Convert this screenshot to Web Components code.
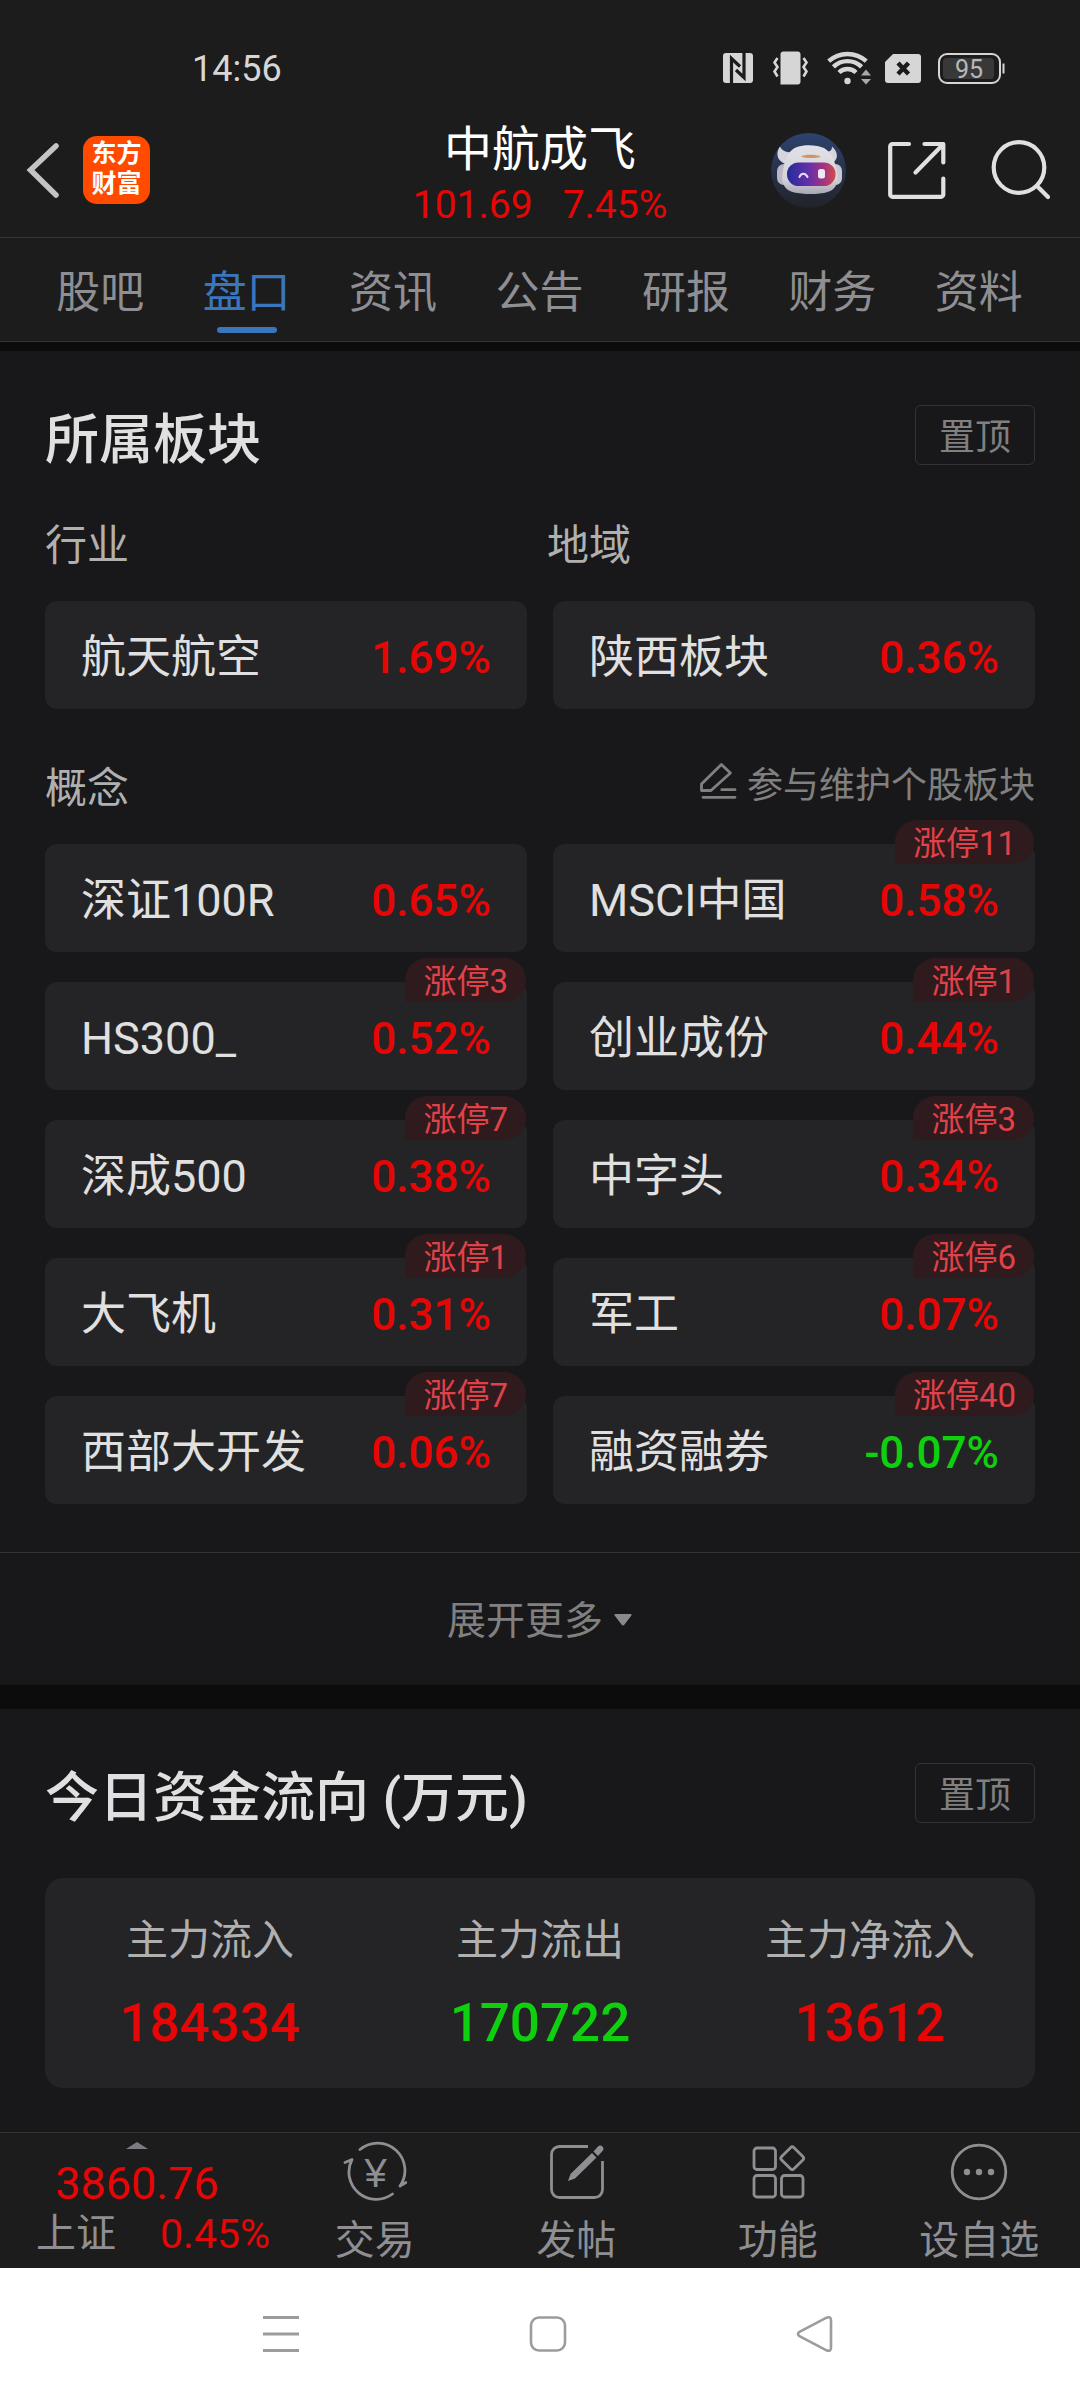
<!DOCTYPE html>
<html lang="zh-CN">
<head>
<meta charset="UTF-8">
<meta name="viewport" content="width=device-width, initial-scale=1">
<title>中航成飞 - 盘口</title>
<style>
  :root {
    --bar: #1c1c1c;
    --page: #18181a;
    --band: #0c0c0c;
    --card: #242426;
    --line: #333335;
    --text: #e0e0e0;
    --muted: #8e8e93;
    --dim: #808080;
    --up: #e60606;
    --down: #0fd00f;
    --blue: #3a76bd;
  }

  body {
    margin: 0;
    min-height: 100vh;
    display: flex;
    flex-direction: column;
    background: var(--page);
    color: var(--text);
    font-family: Roboto, "Noto Sans CJK SC", sans-serif;
  }

  main {
    flex: 1;
  }
</style>
</head>
<body>
  <status-bar time="14:56" battery="95"></status-bar>
  <stock-header name="中航成飞" price="101.69" change="7.45%"></stock-header>
  <stock-tabs items="股吧,盘口,资讯,公告,研报,财务,资料" active="盘口"></stock-tabs>

  <main>
    <board-section heading="所属板块">
      <board-pair>
        <span slot="left">行业</span>
        <span slot="right">地域</span>
      </board-pair>
      <board-grid>
        <board-chip name="航天航空" rate="1.69%"></board-chip>
        <board-chip name="陕西板块" rate="0.36%"></board-chip>
      </board-grid>
      <board-concept>概念<span slot="link">参与维护个股板块</span></board-concept>
      <board-grid>
        <board-chip name="深证100R" rate="0.65%"></board-chip>
        <board-chip name="MSCI中国" rate="0.58%" badge="涨停11"></board-chip>
        <board-chip name="HS300_" rate="0.52%" badge="涨停3"></board-chip>
        <board-chip name="创业成份" rate="0.44%" badge="涨停1"></board-chip>
        <board-chip name="深成500" rate="0.38%" badge="涨停7"></board-chip>
        <board-chip name="中字头" rate="0.34%" badge="涨停3"></board-chip>
        <board-chip name="大飞机" rate="0.31%" badge="涨停1"></board-chip>
        <board-chip name="军工" rate="0.07%" badge="涨停6"></board-chip>
        <board-chip name="西部大开发" rate="0.06%" badge="涨停7"></board-chip>
        <board-chip name="融资融券" rate="-0.07%" badge="涨停40"></board-chip>
      </board-grid>
      <expand-button slot="footer">展开更多</expand-button>
    </board-section>

    <board-section heading="今日资金流向 (万元)">
      <fund-flow inflow="184334" outflow="170722" net="13612"></fund-flow>
    </board-section>
  </main>

  <bottom-bar index-name="上证" index-value="3860.76" index-change="0.45%"></bottom-bar>
  <system-nav></system-nav>

<script>
// Shared reset, prepended to each component's own styles
const base = `
  * { box-sizing: border-box; }
  svg { display: block; flex: none; }
  a { color: inherit; text-decoration: none; }
  button {
    margin: 0;
    padding: 0;
    border: 0;
    background: none;
    color: inherit;
    font: inherit;
    cursor: pointer;
  }
`;

class BaseElement extends HTMLElement {
  connectedCallback() {
    if (!this.shadowRoot) this.attachShadow({ mode: 'open' });
    this.shadowRoot.innerHTML = `<style>${base}${this.styles()}</style>${this.template()}`;
  }

  styles() {
    return '';
  }

  template() {
    return '<slot></slot>';
  }

  attr(name) {
    return this.getAttribute(name) || '';
  }
}

class StatusBar extends BaseElement {
  styles() {
    return `
      :host {
        display: flex;
        justify-content: space-between;
        align-items: center;
        padding: 46px 74px 0 192px;
        background: var(--bar);
        color: #d6d6d6;
      }
      .time { padding-top: 2px; font-size: 36px; line-height: 42px; }
      .icons { display: flex; align-items: center; gap: 14px; }
    `;
  }

  template() {
    return `
      <span class="time">${this.attr('time')}</span>
      <div class="icons">
        <svg width="34" height="36" viewBox="0 0 34 36" role="img" aria-label="NFC">
          <rect x="1" y="3" width="30" height="30" rx="3" fill="#d6d6d6"/>
          <path d="M9.500 33V8.500L18 16.500M22 3V27.500L14 20" fill="none" stroke="#1c1c1c" stroke-width="3.200"/>
        </svg>
        <svg width="40" height="36" viewBox="0 0 40 36" role="img" aria-label="振动">
          <path d="M13.500 1.500h14a3 3 0 0 1 3 3v27a3 3 0 0 1-3 3h-17v-30a3 3 0 0 1 3-3z" fill="#d6d6d6"/>
          <path d="M7.500 8L4.500 12.500L7.500 17L4.500 21.500L7.500 26.500M33.500 8L36.500 12.500L33.500 17L36.500 21.500L33.500 26.500" fill="none" stroke="#d6d6d6" stroke-width="2.600"/>
        </svg>
        <svg width="47" height="36" viewBox="0 0 47 36" role="img" aria-label="Wi-Fi">
          <g fill="none" stroke="#d6d6d6" stroke-width="4.400">
            <path d="M4.700 11.200a28 28 0 0 1 37.600 0"/>
            <path d="M9.400 16.900a20 20 0 0 1 28.200 0"/>
            <path d="M15 22.500a12 12 0 0 1 17 0"/>
          </g>
          <circle cx="23.500" cy="31" r="3.200" fill="#d6d6d6"/>
          <path d="M42 19.500L47 25.500H37zM37 29H47L42 34.500z" fill="#a8a8a8"/>
        </svg>
        <svg width="36" height="36" viewBox="0 0 36 36" role="img" aria-label="无SIM卡">
          <path d="M8 4H33a3 3 0 0 1 3 3V30a3 3 0 0 1-3 3H3a3 3 0 0 1-3-3V12z" fill="#d6d6d6"/>
          <path d="M13 13L23.500 24M23.500 13L13 24" stroke="#1c1c1c" stroke-width="4.400"/>
        </svg>
        <svg width="71" height="36" viewBox="0 0 71 36">
          <rect x="4" y="4" width="61" height="29" rx="8" fill="none" stroke="#d6d6d6" stroke-width="2"/>
          <rect x="8" y="8" width="51" height="21" rx="4" fill="#383838"/>
          <path d="M68.500 13.500V23.500" stroke="#d6d6d6" stroke-width="2"/>
          <text x="34" y="28" text-anchor="middle" font-size="25" fill="#b8b8b8">${this.attr('battery')}</text>
        </svg>
      </div>
    `;
  }
}

class StockHeader extends BaseElement {
  styles() {
    return `
      :host {
        display: grid;
        grid-template-columns: 1fr auto 1fr;
        align-items: center;
        padding: 16px 24px 3px;
        border-bottom: 1px solid var(--line);
        background: var(--bar);
      }
      .left { display: flex; align-items: center; gap: 23px; }
      .right {
        display: flex;
        align-items: center;
        justify-content: flex-end;
        gap: 42px;
        padding-right: 6px;
      }
      .logo {
        width: 67px;
        padding: 3px 0 5px;
        border-radius: 14px;
        background: #ff4a00;
        color: #fff;
        font-size: 25px;
        font-weight: 700;
        line-height: 30px;
        text-align: center;
      }
      .logo span { display: block; }
      .middle { padding: 16px 0 2px; text-align: center; }
      h1 {
        margin: 0;
        color: #fff;
        font-size: 48px;
        font-weight: 400;
        line-height: 56px;
      }
      .quote {
        display: flex;
        justify-content: center;
        gap: 30px;
        color: var(--up);
        font-size: 39px;
        line-height: 54px;
      }
    `;
  }

  template() {
    return `
      <div class="left">
        <button aria-label="返回">
          <svg width="36" height="64" viewBox="0 0 36 64"><path d="M32 8L6.500 32L32 57" fill="none" stroke="#c4c4c4" stroke-width="5.500" stroke-linecap="round"/></svg>
        </button>
        <a class="logo" href="#home"><span>东方</span><span>财富</span></a>
      </div>
      <div class="middle">
        <h1>${this.attr('name')}</h1>
        <div class="quote"><span>${this.attr('price')}</span><span>${this.attr('change')}</span></div>
      </div>
      <div class="right">
        <button aria-label="智能助手">
          <svg width="75" height="75" viewBox="0 0 75 75">
            <defs>
              <linearGradient id="sky" x1="0" y1="0" x2="0" y2="1"><stop offset="0" stop-color="#2d426e"/><stop offset="1" stop-color="#212329"/></linearGradient>
              <linearGradient id="shell" x1="0" y1="0" x2="0" y2="1"><stop offset="0" stop-color="#e2e1e8"/><stop offset="0.700" stop-color="#d4d2da"/><stop offset="1" stop-color="#a9a7b2"/></linearGradient>
              <linearGradient id="visor"><stop offset="0" stop-color="#242c98"/><stop offset="0.450" stop-color="#6530a8"/><stop offset="0.750" stop-color="#a03480"/><stop offset="1" stop-color="#d24a50"/></linearGradient>
            </defs>
            <circle cx="37.500" cy="37.500" r="37.500" fill="url(#sky)"/>
            <path d="M9 13.500C5 19 5 27 14 31L24 19C16 20 11 18 9 13.500zM61 13.500C67.500 19 68 27 60 31L50 18C58 20 61 18 61 13.500z" fill="#d6d5dd"/>
            <rect x="6" y="31" width="14" height="21" rx="7" fill="#b9b7c2"/>
            <rect x="58" y="31" width="13" height="21" rx="6.500" fill="#c9c7d0"/>
            <path d="M26 14C34 11 47 12 53 15C60 19 63 26 65 34C68 41 67 50 64 54C60 60 50 61 39 61C27 61 17 59 14 54C10 48 11 40 13 33C15 24 18 17 26 14z" fill="url(#shell)"/>
            <path d="M30 23.500C34 21 45 21.500 50 23.500C45 25.500 35 25.500 30 23.500z" fill="#cf965f"/>
            <rect x="16" y="29.500" width="48.500" height="23.500" rx="11.500" fill="url(#visor)"/>
            <path d="M28.500 44C30 39.500 34.500 39.500 36.500 44" fill="none" stroke="#e8dcff" stroke-width="2" stroke-linecap="round"/>
            <rect x="47" y="36" width="7" height="9.500" rx="2.500" fill="#efe6f7"/>
          </svg>
        </button>
        <button aria-label="分享">
          <svg width="60" height="60" viewBox="0 0 60 60" fill="none" stroke="#e0e0e0" stroke-width="4.200" stroke-linecap="round" stroke-linejoin="round"><path d="M21 4H4.500a2.300 2.300 0 0 0-2.300 2.300V54.500a2.300 2.300 0 0 0 2.300 2.300H53a2.300 2.300 0 0 0 2.300-2.300V38.500M36.500 4H55.300V22.500M54 5.500L27.500 32.500"/></svg>
        </button>
        <button aria-label="搜索">
          <svg width="60" height="60" viewBox="0 0 60 60" fill="none" stroke="#e0e0e0" stroke-width="4.200" stroke-linecap="round"><circle cx="29" cy="27.500" r="25.300"/><path d="M47 46L58 57"/></svg>
        </button>
      </div>
    `;
  }
}

class StockTabs extends BaseElement {
  styles() {
    return `
      :host {
        display: block;
        border-bottom: 9px solid var(--band);
        background: var(--bar);
      }
      nav {
        display: flex;
        padding: 0 28px 0 27px;
        border-bottom: 1px solid var(--line);
      }
      a {
        flex: 1;
        display: flex;
        flex-direction: column;
        align-items: center;
        padding: 25px 0 8px;
        color: var(--muted);
        font-size: 44px;
        line-height: 60px;
      }
      a::after {
        content: "";
        width: 60px;
        height: 6px;
        margin-top: 4px;
        border-radius: 3px;
      }
      a[aria-current] { color: var(--blue); }
      a[aria-current]::after { background: var(--blue); }
    `;
  }

  template() {
    const active = this.attr('active');
    const links = this.attr('items').split(',').map(item =>
      `<a href="#${item}"${item === active ? ' aria-current="page"' : ''}>${item}</a>`
    ).join('');
    return `<nav>${links}</nav>`;
  }
}

class BoardSection extends BaseElement {
  styles() {
    return `
      :host { display: block; }
      :host(:not(:last-child)) { border-bottom: 24px solid var(--band); }
      .body { padding: 54px 45px 44px; }
      :host(:not(:last-child)) .body { padding-bottom: 48px; }
      header {
        display: flex;
        justify-content: space-between;
        align-items: center;
        margin-bottom: 55px;
      }
      :host(:not(:last-child)) header { margin-bottom: 49px; }
      h2 {
        margin: 0;
        padding-top: 12px;
        font-size: 54px;
        font-weight: 500;
        line-height: 48px;
      }
      button {
        width: 120px;
        height: 60px;
        padding-top: 6px;
        border: 1px solid var(--line);
        border-radius: 6px;
        color: var(--dim);
        font-size: 36px;
        line-height: 52px;
      }
    `;
  }

  template() {
    return `
      <section>
        <div class="body">
          <header>
            <h2>${this.attr('heading')}</h2>
            <button>置顶</button>
          </header>
          <slot></slot>
        </div>
        <slot name="footer"></slot>
      </section>
    `;
  }
}

class BoardPair extends BaseElement {
  styles() {
    return `
      :host {
        display: grid;
        grid-template-columns: 1fr 1fr;
        gap: 14px;
        margin-bottom: 25px;
        padding-top: 2px;
        color: #b0b0b0;
        font-size: 42px;
        line-height: 60px;
      }
    `;
  }

  template() {
    return '<slot name="left"></slot><slot name="right"></slot>';
  }
}

class BoardConcept extends BaseElement {
  styles() {
    return `
      :host {
        display: flex;
        justify-content: space-between;
        align-items: flex-start;
        margin: 50px 0 25px;
        color: #b0b0b0;
        font-size: 42px;
        line-height: 60px;
      }
      a {
        display: flex;
        align-items: center;
        gap: 10px;
        color: var(--dim);
        font-size: 36px;
        line-height: 54px;
      }
      svg { margin-bottom: 10px; }
    `;
  }

  template() {
    return `
      <span><slot></slot></span>
      <a href="#maintain">
        <svg width="38" height="38" viewBox="0 0 38 38" fill="none" stroke="#808080" stroke-width="2.800" stroke-linecap="round" stroke-linejoin="round"><path d="M2.500 28.500V22L22.400 2.500L31.400 11L12 28.500zM4 35.300H36M22.800 27.700H36"/></svg>
        <slot name="link"></slot>
      </a>
    `;
  }
}

class BoardGrid extends BaseElement {
  styles() {
    return `
      :host {
        display: grid;
        grid-template-columns: 1fr 1fr;
        gap: 30px 26px;
      }
    `;
  }
}

class BoardChip extends BaseElement {
  styles() {
    return `
      :host { display: block; position: relative; }
      a {
        display: flex;
        justify-content: space-between;
        align-items: center;
        padding: 27px 36px 21px;
        border-radius: 12px;
        background: var(--card);
        font-size: 45px;
        line-height: 60px;
      }
      .rate { color: var(--up); font-size: 44px; font-weight: 500; }
      .rate.down { color: var(--down); }
      .badge {
        position: absolute;
        top: -24px;
        right: 1px;
        padding: 4px 18px 0;
        border-radius: 22px 22px 22px 0;
        background: #2f1b1d;
        color: #e0424a;
        font-size: 33px;
        line-height: 40px;
      }
    `;
  }

  template() {
    const rate = this.attr('rate');
    const badge = this.attr('badge');
    return `
      <a href="#board">
        <span>${this.attr('name')}</span>
        <span class="rate ${rate.startsWith('-') ? 'down' : ''}">${rate}</span>
      </a>
      ${badge ? `<span class="badge">${badge}</span>` : ''}
    `;
  }
}

class ExpandButton extends BaseElement {
  styles() {
    return `
      :host {
        display: block;
        border-top: 1px solid var(--line);
      }
      button {
        display: flex;
        justify-content: center;
        align-items: center;
        gap: 10px;
        width: 100%;
        padding: 38px 0 34px;
        color: var(--dim);
        font-size: 39px;
        line-height: 60px;
      }
      svg { margin-bottom: 2px; }
    `;
  }

  template() {
    return `
      <button>
        <slot></slot>
        <svg width="20" height="14" viewBox="0 0 20 14"><path d="M2.500 1H17.500Q19.500 1 18 3L11.500 11.500Q10 13.500 8.500 11.500L2 3Q0.500 1 2.500 1z" fill="#8a8a8a"/></svg>
      </button>
    `;
  }
}

class FundFlow extends BaseElement {
  styles() {
    return `
      :host { display: block; }
      dl {
        display: grid;
        grid-template-columns: repeat(3, 1fr);
        margin: 0;
        padding: 33px 0 29px;
        border-radius: 18px;
        background: var(--card);
        text-align: center;
      }
      dt { color: #b0b0b0; font-size: 42px; line-height: 60px; }
      dd {
        margin: 16px 0 0;
        color: var(--up);
        font-size: 53px;
        font-weight: 500;
        line-height: 72px;
      }
      .down { color: var(--down); }
    `;
  }

  template() {
    return `
      <dl>
        <div><dt>主力流入</dt><dd>${this.attr('inflow')}</dd></div>
        <div><dt>主力流出</dt><dd class="down">${this.attr('outflow')}</dd></div>
        <div><dt>主力净流入</dt><dd>${this.attr('net')}</dd></div>
      </dl>
    `;
  }
}

class BottomBar extends BaseElement {
  styles() {
    return `
      :host {
        display: grid;
        grid-template-columns: 274px repeat(4, 1fr);
        border-top: 1px solid var(--line);
        background: var(--bar);
        color: var(--muted);
        font-size: 40px;
      }
      .index {
        display: flex;
        flex-direction: column;
        align-items: center;
        padding-top: 9px;
      }
      .value { margin-top: 9px; color: var(--up); font-size: 45px; line-height: 52px; }
      .row {
        display: flex;
        justify-content: space-between;
        align-self: stretch;
        padding: 0 4px 0 36px;
        line-height: 48px;
      }
      .change { color: var(--up); font-size: 41px; }
      .item {
        display: flex;
        flex-direction: column;
        align-items: center;
        gap: 10px;
        padding-top: 7px;
        line-height: 54px;
      }
    `;
  }

  template() {
    return `
      <button class="index">
        <svg width="22" height="7" viewBox="0 0 22 7"><path d="M11 0L22 7H0z" fill="#7c7c80"/></svg>
        <span class="value">${this.attr('index-value')}</span>
        <span class="row"><span>${this.attr('index-name')}</span><span class="change">${this.attr('index-change')}</span></span>
      </button>
      <button class="item">
        <svg width="64" height="64" viewBox="0 0 64 64" fill="none" stroke="#8e8e93" stroke-width="2.800" stroke-linecap="round" stroke-linejoin="round">
          <path d="M17 9.500A27.300 27.300 0 0 1 57 46L63 42.500M49.500 54A27.300 27.300 0 0 1 9 19.500L2 22.500"/>
          <text x="32.500" y="47" text-anchor="middle" font-family="Liberation Sans, sans-serif" font-size="40" fill="#8e8e93" stroke="none">¥</text>
        </svg>
        交易
      </button>
      <button class="item">
        <svg width="64" height="64" viewBox="0 0 64 64">
          <path d="M44 6.500H15.500a8 8 0 0 0-8 8V49.500a8 8 0 0 0 8 8H50.500a8 8 0 0 0 8-8V21" fill="none" stroke="#8e8e93" stroke-width="2.800"/>
          <path d="M24 41L26.500 34L48 13L52.500 17.500L31 38.500zM49.500 11.500L54 6.500Q56 4.500 58.500 6.500Q60.500 9 58.500 11L54 16z" fill="#8e8e93"/>
        </svg>
        发帖
      </button>
      <button class="item">
        <svg width="64" height="64" viewBox="0 0 64 64" fill="none" stroke="#8e8e93" stroke-width="2.800" stroke-linejoin="round">
          <rect x="8" y="8" width="21.500" height="21.500" rx="3"/>
          <rect x="8" y="35.500" width="21.500" height="21.500" rx="3"/>
          <rect x="35.500" y="35.500" width="21.500" height="21.500" rx="3"/>
          <rect x="37.500" y="9.500" width="17.500" height="17.500" rx="2.500" transform="rotate(45 46.250 18.250)"/>
        </svg>
        功能
      </button>
      <button class="item">
        <svg width="64" height="64" viewBox="0 0 64 64">
          <circle cx="32" cy="32" r="26.800" fill="none" stroke="#8e8e93" stroke-width="2.800"/>
          <g fill="#8e8e93"><circle cx="20" cy="32" r="3.200"/><circle cx="32" cy="32" r="3.200"/><circle cx="44" cy="32" r="3.200"/></g>
        </svg>
        设自选
      </button>
    `;
  }
}

class SystemNav extends BaseElement {
  styles() {
    return `
      :host {
        display: flex;
        padding: 46px 132px 46px 147px;
        background: #fff;
      }
      button { flex: 1; display: flex; justify-content: center; }
    `;
  }

  template() {
    return `
      <button aria-label="最近任务">
        <svg width="40" height="40" viewBox="0 0 40 40" fill="none" stroke="#9c9c9c" stroke-width="3"><path d="M2 3.500H38M2 20H38M2 36.500H38"/></svg>
      </button>
      <button aria-label="主屏幕">
        <svg width="40" height="40" viewBox="0 0 40 40" fill="none" stroke="#9c9c9c" stroke-width="2.600"><rect x="3" y="3.500" width="34" height="33" rx="8"/></svg>
      </button>
      <button aria-label="返回">
        <svg width="40" height="40" viewBox="0 0 40 40" fill="none" stroke="#9c9c9c" stroke-width="2.600"><path d="M4.500 17.800L31.500 3.700Q35.800 2 36 6V34Q35.800 38 31.500 36.300L4.500 22.200Q1.500 20 4.500 17.800z"/></svg>
      </button>
    `;
  }
}

customElements.define('status-bar', StatusBar);
customElements.define('stock-header', StockHeader);
customElements.define('stock-tabs', StockTabs);
customElements.define('board-section', BoardSection);
customElements.define('board-pair', BoardPair);
customElements.define('board-concept', BoardConcept);
customElements.define('board-grid', BoardGrid);
customElements.define('board-chip', BoardChip);
customElements.define('expand-button', ExpandButton);
customElements.define('fund-flow', FundFlow);
customElements.define('bottom-bar', BottomBar);
customElements.define('system-nav', SystemNav);
</script>
</body>
</html>
